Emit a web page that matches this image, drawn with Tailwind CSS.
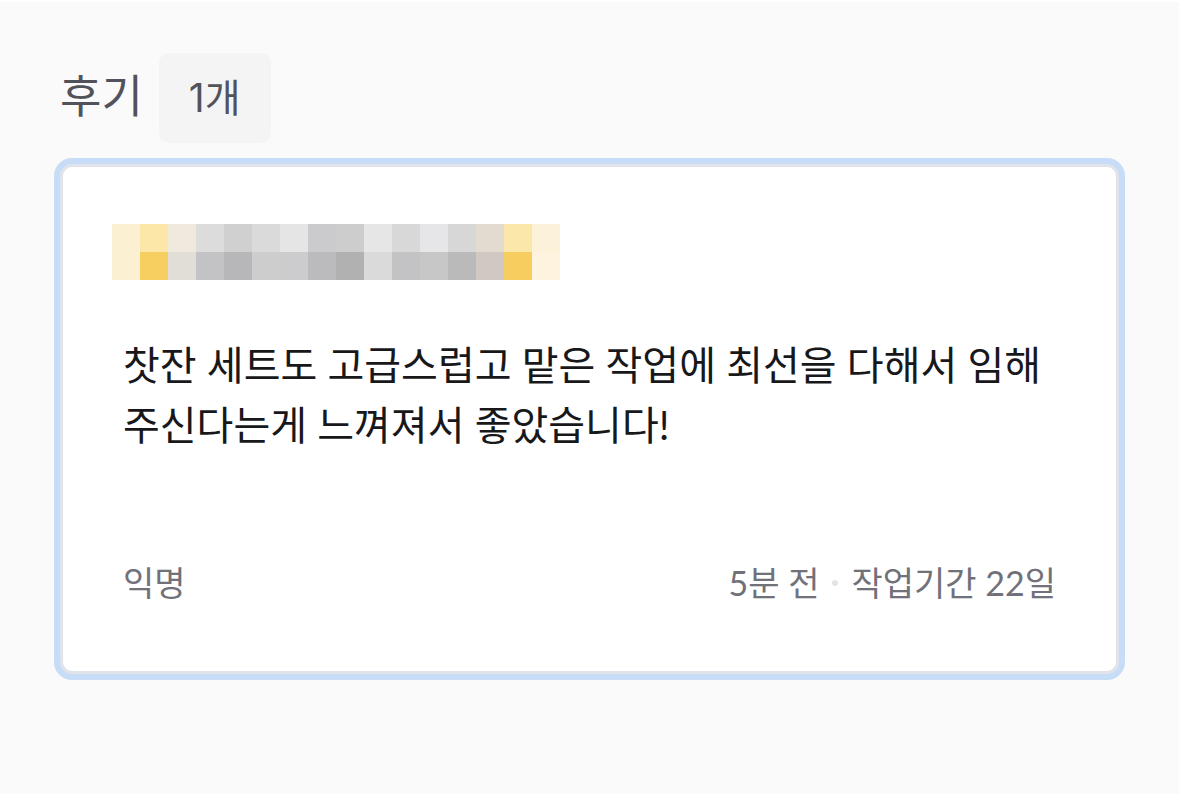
<!DOCTYPE html>
<html lang="ko">
<head>
<meta charset="utf-8">
<meta name="viewport" content="width=device-width, initial-scale=1">
<title>후기</title>
<script src="https://cdn.jsdelivr.net/npm/@tailwindcss/browser@4"></script>
</head>
<body class="bg-white pt-0.5 font-[Lato,'Noto_Sans_CJK_KR',sans-serif]">
<main class="bg-[#fafafa] px-[60px] pt-[51px] pb-[120px]">
  <header class="flex items-start gap-4">
    <h1 class="pt-[13px] text-[45px] leading-[60px] font-normal text-[#52525b]">후기</h1>
    <span class="rounded-[10px] bg-[#f4f4f5] px-[30px] py-[15px] font-[Inter,'Noto_Sans_CJK_KR',sans-serif] text-[39px] leading-[60px] text-[#52525b]">1개</span>
  </header>
  <article class="mt-[21px] rounded-xl border-3 border-[#e1e3ea] bg-white px-[60px] pt-[57px] pb-[61px] ring-6 ring-[#c7ddf7]">
    <svg class="-ml-[11px] h-14 w-[448px]" viewBox="0 0 16 2" shape-rendering="crispEdges" role="img" aria-label="별점">
      <path fill="#fcf0d3" d="M0 0h1v2H0z"/>
      <path fill="#fce7a9" d="M1 0h1v1H1z"/><path fill="#f7ce60" d="M1 1h1v1H1z"/>
      <path fill="#efe9de" d="M2 0h1v1H2z"/><path fill="#e1ded8" d="M2 1h1v1H2z"/>
      <path fill="#dcdcdd" d="M3 0h1v1H3z"/><path fill="#c3c3c6" d="M3 1h1v1H3z"/>
      <path fill="#d0d0d0" d="M4 0h1v1H4z"/><path fill="#b7b7b9" d="M4 1h1v1H4z"/>
      <path fill="#dadada" d="M5 0h1v1H5z"/><path fill="#cdcdcd" d="M5 1h1v1H5z"/>
      <path fill="#e5e5e5" d="M6 0h1v1H6z"/><path fill="#cccccf" d="M6 1h1v1H6z"/>
      <path fill="#cbcbcd" d="M7 0h1v1H7z"/><path fill="#bbbbbd" d="M7 1h1v1H7z"/>
      <path fill="#cdcdcd" d="M8 0h1v1H8z"/><path fill="#b1b1b1" d="M8 1h1v1H8z"/>
      <path fill="#e6e6e6" d="M9 0h1v1H9z"/><path fill="#dadada" d="M9 1h1v1H9z"/>
      <path fill="#d8d8d8" d="M10 0h1v1h-1z"/><path fill="#c3c3c6" d="M10 1h1v1h-1z"/>
      <path fill="#e6e6e9" d="M11 0h1v1h-1z"/><path fill="#c7c7c7" d="M11 1h1v1h-1z"/>
      <path fill="#d7d7d8" d="M12 0h1v1h-1z"/><path fill="#bababa" d="M12 1h1v1h-1z"/>
      <path fill="#e3dbcf" d="M13 0h1v1h-1z"/><path fill="#d0c8c2" d="M13 1h1v1h-1z"/>
      <path fill="#fae7a9" d="M14 0h1v1h-1z"/><path fill="#f7cd60" d="M14 1h1v1h-1z"/>
      <path fill="#fcf1d9" d="M15 0h1v1h-1z"/><path fill="#fdf3de" d="M15 1h1v1h-1z"/>
    </svg>
    <p class="mt-[55px] text-[40px] leading-[60px] text-[#18181b]">찻잔 세트도 고급스럽고 맡은 작업에 최선을 다해서 임해주신다는게 느껴져서 좋았습니다!</p>
    <footer class="mt-[101px] flex items-center justify-between text-[34px] leading-[54px] text-[#71717a]">
      <span>익명</span>
      <div class="flex items-center gap-[13px]">
        <span>5분 전</span>
        <span class="size-1.5 rounded-full bg-[#e4e4e7]"></span>
        <span>작업기간 22일</span>
      </div>
    </footer>
  </article>
</main>
</body>
</html>
